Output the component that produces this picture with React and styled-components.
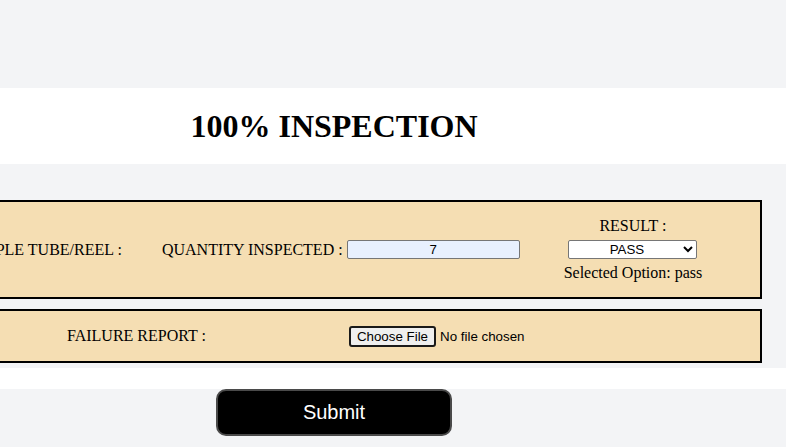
import React, { useState } from 'react';
import styled, { createGlobalStyle } from 'styled-components';

const GlobalStyle = createGlobalStyle`
  html, body {
    margin: 0;
    padding: 0;
    background-color: #f3f4f6;
    overflow: hidden;
    font-family: "Liberation Serif", "Times New Roman", serif;
    font-size: 16px;
    color: #000;
  }
`;

// the page is wider than the window and scrolled a little to the right
const Page = styled.div`
  width: 904px;
  margin-left: -118px;
  padding-top: 88px;
`;

const HeaderBand = styled.div`
  background-color: #ffffff;
  padding: 20px 0 19px;
  text-align: center;
`;

const Title = styled.h1`
  margin: 0;
  font-size: 32px;
  line-height: 37px;
  font-weight: bold;
`;

const FormSection = styled.div`
  display: flex;
  flex-direction: column;
  gap: 10px;
  padding: 36px 24px 5px;
`;

const Card = styled.div`
  box-sizing: border-box;
  height: ${(p) => p.$height}px;
  border: 2px solid #000;
  background-color: wheat;
  display: flex;
  align-items: center;
  padding-left: ${(p) => p.$padLeft}px;
`;

const Field = styled.div`
  display: flex;
  align-items: center;
  gap: 4px;
  margin-left: ${(p) => p.$offset || 0}px;
`;

const Label = styled.span`
  white-space: nowrap;
`;

const QtyInput = styled.input`
  box-sizing: border-box;
  width: 173px;
  height: 19px;
  margin: 0;
  padding: 0 2px;
  border: 1px solid #767676;
  border-radius: 2px;
  background-color: #e8f0fe;
  font-family: "Liberation Sans", Arial, sans-serif;
  font-size: 13.33px;
  text-align: center;
  color: #000;
`;

const ResultColumn = styled.div`
  display: flex;
  flex-direction: column;
  align-items: center;
  gap: 5px;
  margin-left: ${(p) => p.$offset}px;
  line-height: 18px;
`;

const ResultSelect = styled.select`
  box-sizing: border-box;
  width: 129px;
  height: 19px;
  margin: 0;
  border: 1px solid #767676;
  border-radius: 2px;
  background-color: #fff;
  font-family: "Liberation Sans", Arial, sans-serif;
  font-size: 13.33px;
  text-align: center;
  color: #000;
`;

const FileInput = styled.input`
  margin-left: ${(p) => p.$offset}px;
  font-family: "Liberation Sans", Arial, sans-serif;
  font-size: 13.33px;
  color: #000;

  &::file-selector-button {
    box-sizing: border-box;
    height: 21px;
    margin: 0 4px 0 0;
    padding: 1px 6px;
    border: 2px solid #1a1a1a;
    border-radius: 3px;
    background-color: #efefef;
    font-family: "Liberation Sans", Arial, sans-serif;
    font-size: 13.33px;
    color: #000;
  }
`;

const WhiteGap = styled.div`
  height: 21px;
  background-color: #ffffff;
`;

const Footer = styled.div`
  display: flex;
  justify-content: center;
  height: 60px;
`;

const SubmitButton = styled.button`
  box-sizing: border-box;
  width: 236px;
  height: 47px;
  border: 2px solid #4a4a4a;
  border-radius: 10px;
  background-color: #000;
  color: #fff;
  font-family: "Liberation Sans", Arial, sans-serif;
  font-size: 20px;
  cursor: pointer;
`;

export default function App() {
  const [result, setResult] = useState('pass');

  return (
    <>
      <GlobalStyle />
      <Page>
        <HeaderBand>
          <Title>100% INSPECTION</Title>
        </HeaderBand>
        <FormSection>
          <Card $height={99} $padLeft={53}>
            <Field>
              <Label>SAMPLE TUBE/REEL :</Label>
            </Field>
            <Field $offset={40}>
              <Label>QUANTITY INSPECTED :</Label>
              <QtyInput type="text" defaultValue="7" />
            </Field>
            <ResultColumn $offset={44}>
              <Label>RESULT :</Label>
              <ResultSelect value={result} onChange={(e) => setResult(e.target.value)}>
                <option value="pass">PASS</option>
                <option value="fail">FAIL</option>
              </ResultSelect>
              <Label>Selected Option: {result}</Label>
            </ResultColumn>
          </Card>
          <Card $height={54} $padLeft={159}>
            <Label>FAILURE REPORT :</Label>
            <FileInput type="file" $offset={143} />
          </Card>
        </FormSection>
        <WhiteGap />
        <Footer>
          <SubmitButton type="button">Submit</SubmitButton>
        </Footer>
      </Page>
    </>
  );
}
